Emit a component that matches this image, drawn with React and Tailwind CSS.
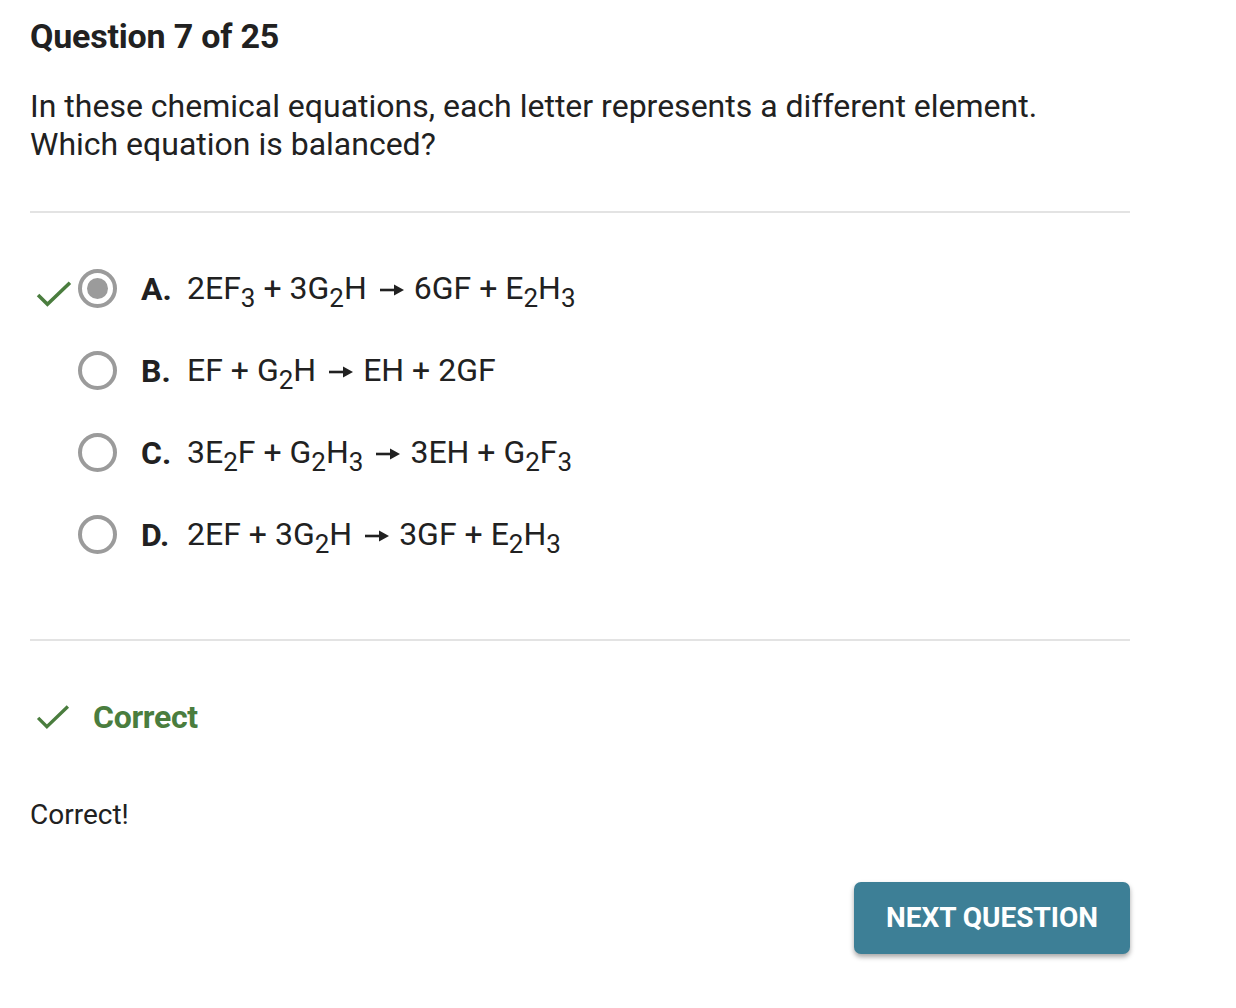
import React from "react";

function Sub({ children }) {
  return <span className="text-[26px]" style={{ verticalAlign: "-0.3em", lineHeight: 0 }}>{children}</span>;
}

function Arrow() {
  return (
    <svg viewBox="0 0 24 12" className="inline-block w-[24px] h-[12px] ml-[13px] mr-[10px] align-middle relative top-[-1px]">
      <path d="M0 6 H17" stroke="#212121" strokeWidth="2.6" />
      <path d="M14 0.5 L24 6 L14 11.5 Z" fill="#212121" />
    </svg>
  );
}

function Check({ className }) {
  return (
    <svg viewBox="0 0 40 32" className={className} fill="none" stroke="#4a7d3e" strokeWidth="3.8" strokeLinecap="butt" strokeLinejoin="miter">
      <path d="M3 17 L13 27 L37 4" />
    </svg>
  );
}

function Radio({ checked }) {
  return (
    <div className="w-[39px] h-[39px] rounded-full border-[4px] border-[#9b9b9b] flex items-center justify-center shrink-0">
      {checked && <div className="w-[21px] h-[21px] rounded-full bg-[#9b9b9b]" />}
    </div>
  );
}

const options = [
  { letter: "A.", checked: true, eq: <>2EF<Sub>3</Sub> + 3G<Sub>2</Sub>H<Arrow />6GF + E<Sub>2</Sub>H<Sub>3</Sub></> },
  { letter: "B.", eq: <>EF + G<Sub>2</Sub>H<Arrow />EH + 2GF</> },
  { letter: "C.", eq: <>3E<Sub>2</Sub>F + G<Sub>2</Sub>H<Sub>3</Sub><Arrow />3EH + G<Sub>2</Sub>F<Sub>3</Sub></> },
  { letter: "D.", eq: <>2EF + 3G<Sub>2</Sub>H<Arrow />3GF + E<Sub>2</Sub>H<Sub>3</Sub></> },
];

export default function App() {
  return (
    <div className="w-[1236px] h-[1008px] bg-white text-[#212121]" style={{ fontFamily: "Roboto, 'Liberation Sans', sans-serif" }}>
      <div className="w-[1100px] ml-[30px] pt-[16px]">
        <h1 className="text-[34px] font-bold leading-[40px] tracking-[-0.2px]">Question 7 of 25</h1>
        <p className="mt-[31px] text-[32px] leading-[38px]">
          In these chemical equations, each letter represents a different element.
          <br />
          Which equation is balanced?
        </p>
        <div className="mt-[48px] h-[2px] bg-[#e3e3e3]" />
        <div className="mt-[56px] flex flex-col gap-[43px]">
          {options.map((o) => (
            <div key={o.letter} className="flex items-center h-[39px] relative">
              {o.checked && <Check className="absolute left-[5px] top-[10px] w-[38px] h-[30px]" />}
              <div className="ml-[48px]"><Radio checked={o.checked} /></div>
              <span className="ml-[24px] text-[32px] font-bold w-[46px]">{o.letter}</span>
              <span className="text-[32px] leading-[39px] whitespace-nowrap">{o.eq}</span>
            </div>
          ))}
        </div>
        <div className="mt-[85px] h-[2px] bg-[#e3e3e3]" />
        <div className="mt-[56px] flex items-center h-[40px]">
          <Check className="ml-[5px] w-[36px] h-[28px]" />
          <span className="ml-[22px] text-[32px] font-bold text-[#4a7d3e] tracking-[-0.3px]">Correct</span>
        </div>
        <p className="mt-[61px] text-[28px] leading-[34px]">Correct!</p>
        <div className="flex justify-end mt-[50px]">
          <button className="w-[276px] h-[72px] rounded-[7px] bg-[#3d7f96] text-white text-[28px] font-bold shadow-[0_3px_5px_rgba(0,0,0,0.35)]">
            NEXT QUESTION
          </button>
        </div>
      </div>
    </div>
  );
}
